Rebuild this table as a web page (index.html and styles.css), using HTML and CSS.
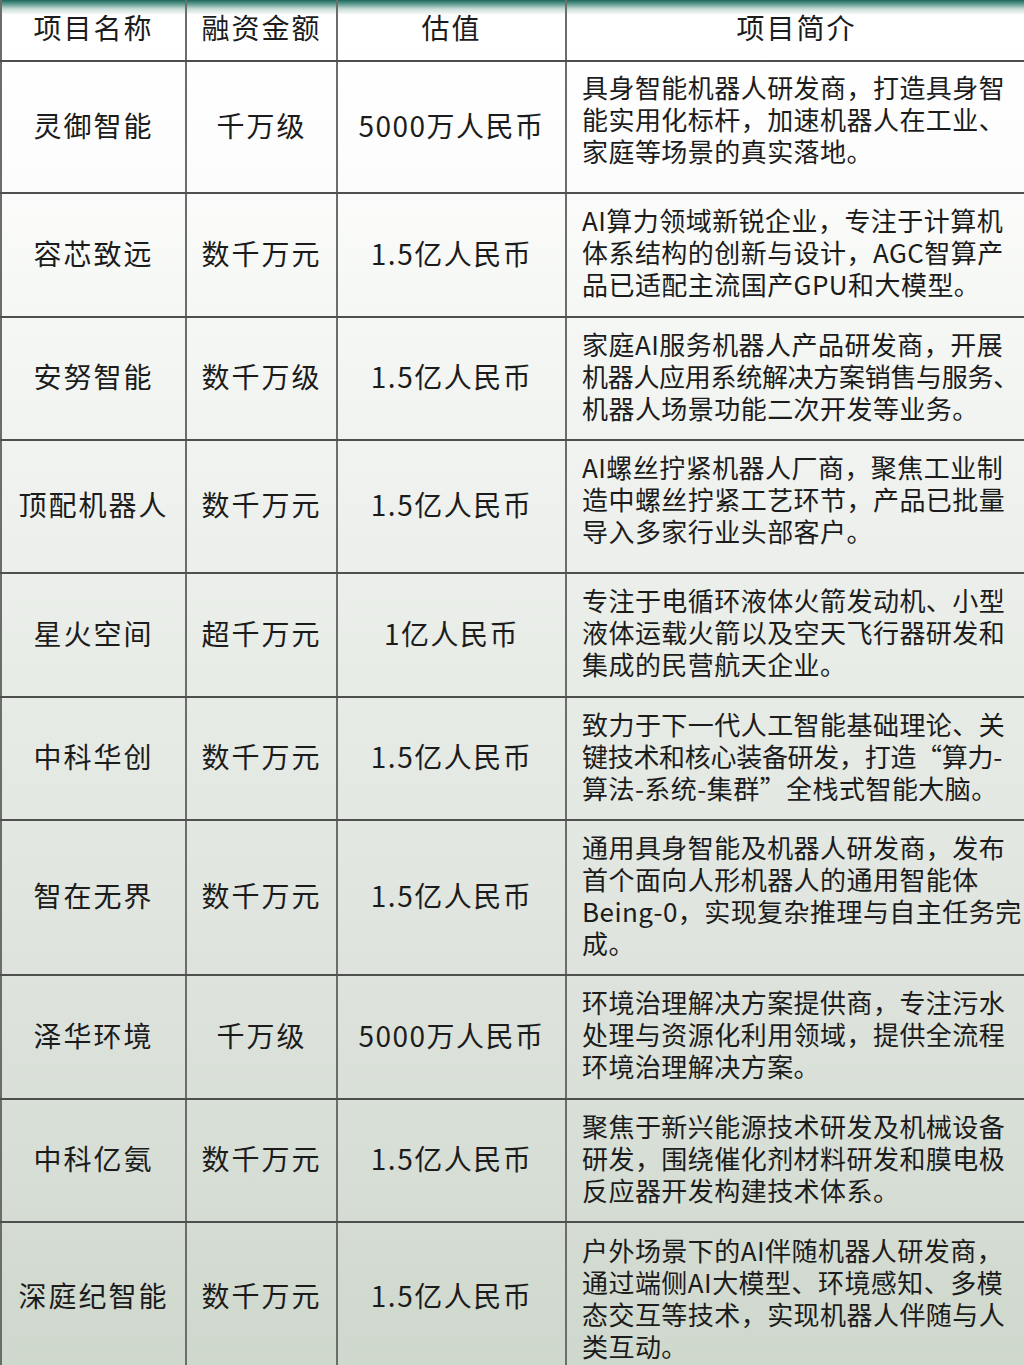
FILE: index.html
```html
<!DOCTYPE html>
<html lang="zh-CN">
<head>
<meta charset="utf-8">
<title>项目融资列表</title>
<link rel="stylesheet" href="styles.css">
</head>
<body>
<table class="grid">
  <colgroup>
    <col class="c-name"><col class="c-amount"><col class="c-value"><col class="c-desc">
  </colgroup>
  <thead>
    <tr class="head">
      <th>项目名称</th><th>融资金额</th><th>估值</th><th>项目简介</th>
    </tr>
  </thead>
  <tbody>
    <tr class="r1 tall">
      <td class="name">灵御智能</td><td class="amt">千万级</td><td class="val">5000万人民币</td>
      <td class="desc">具身智能机器人研发商，打造具身智<br>能实用化标杆，加速机器人在工业、<br>家庭等场景的真实落地。</td>
    </tr>
    <tr class="r2">
      <td class="name">容芯致远</td><td class="amt">数千万元</td><td class="val">1.5亿人民币</td>
      <td class="desc">AI算力领域新锐企业，专注于计算机<br>体系结构的创新与设计，AGC智算产<br>品已适配主流国产GPU和大模型。</td>
    </tr>
    <tr class="r3">
      <td class="name">安努智能</td><td class="amt">数千万级</td><td class="val">1.5亿人民币</td>
      <td class="desc">家庭AI服务机器人产品研发商，开展<br><span class="tight">机器人应用系统解决方案销售与服务、</span><br>机器人场景功能二次开发等业务。</td>
    </tr>
    <tr class="r4 tall">
      <td class="name">顶配机器人</td><td class="amt">数千万元</td><td class="val">1.5亿人民币</td>
      <td class="desc">AI螺丝拧紧机器人厂商，聚焦工业制<br>造中螺丝拧紧工艺环节，产品已批量<br>导入多家行业头部客户。</td>
    </tr>
    <tr class="r5">
      <td class="name">星火空间</td><td class="amt">超千万元</td><td class="val">1亿人民币</td>
      <td class="desc">专注于电循环液体火箭发动机、小型<br>液体运载火箭以及空天飞行器研发和<br>集成的民营航天企业。</td>
    </tr>
    <tr class="r6">
      <td class="name">中科华创</td><td class="amt">数千万元</td><td class="val">1.5亿人民币</td>
      <td class="desc">致力于下一代人工智能基础理论、关<br><span class="tight">键技术和核心装备研发，打造“算力-</span><br>算法-系统-集群”全栈式智能大脑。</td>
    </tr>
    <tr class="r7">
      <td class="name">智在无界</td><td class="amt">数千万元</td><td class="val">1.5亿人民币</td>
      <td class="desc">通用具身智能及机器人研发商，发布<br>首个面向人形机器人的通用智能体<br>Being-0，实现复杂推理与自主任务完<br>成。</td>
    </tr>
    <tr class="r8">
      <td class="name">泽华环境</td><td class="amt">千万级</td><td class="val">5000万人民币</td>
      <td class="desc">环境治理解决方案提供商，专注污水<br>处理与资源化利用领域，提供全流程<br>环境治理解决方案。</td>
    </tr>
    <tr class="r9">
      <td class="name">中科亿氨</td><td class="amt">数千万元</td><td class="val">1.5亿人民币</td>
      <td class="desc">聚焦于新兴能源技术研发及机械设备<br>研发，围绕催化剂材料研发和膜电极<br>反应器开发构建技术体系。</td>
    </tr>
    <tr class="r10">
      <td class="name">深庭纪智能</td><td class="amt">数千万元</td><td class="val">1.5亿人民币</td>
      <td class="desc">户外场景下的AI伴随机器人研发商，<br>通过端侧AI大模型、环境感知、多模<br>态交互等技术，实现机器人伴随与人<br>类互动。</td>
    </tr>
  </tbody>
</table>
</body>
</html>
```

FILE: styles.css
```css
html, body {
  margin: 0;
  padding: 0;
}
body {
  width: 1024px;
  height: 1365px;
  overflow: hidden;
  background: linear-gradient(to bottom,
    #1d685b 0px,
    #5d9a8f 4px,
    #c9ddd8 9px,
    #ffffff 15px,
    #fcfdfc 150px,
    #eef1ed 500px,
    #e2e7e1 850px,
    #d9e0d8 1100px,
    #cfd8cd 1365px);
  font-family: "Noto Sans CJK SC", "Noto Sans", sans-serif;
  color: #1c1c1c;
}
.grid {
  border-collapse: collapse;
  table-layout: fixed;
  width: 1025px;
}
.c-name { width: 185px; }
.c-amount { width: 151px; }
.c-value { width: 229px; }
.c-desc { width: 460px; }

.grid th, .grid td {
  border-left: 2px solid #6a6d6a;
  border-bottom: 2px solid #4d504d;
  padding: 0;
  vertical-align: middle;
}
.grid th {
  border-top: none;
  font-weight: 400;
  font-size: 28px;
  letter-spacing: 2px;
  text-align: center;
  line-height: 36px;
  padding-bottom: 6px;
}
.grid td {
  text-align: center;
  font-size: 28px;
  letter-spacing: 2px;
  line-height: 36px;
  padding-bottom: 5px;
}
.grid td.desc {
  text-align: left;
  font-size: 26px;
  letter-spacing: 0.45px;
  line-height: 32px;
  padding-left: 15px;
  padding-bottom: 6px;
  white-space: nowrap;
  overflow: hidden;
}
.grid .tall td.desc { padding-bottom: 16px; }
.grid td.val { letter-spacing: 1.5px; }
.tight { letter-spacing: -0.3px; }

.head { height: 61px; }
.r1 { height: 132px; }
.r2 { height: 124px; }
.r3 { height: 123px; }
.r4 { height: 133px; }
.r5 { height: 124px; }
.r6 { height: 123px; }
.r7 { height: 155px; }
.r8 { height: 124px; }
.r9 { height: 123px; }
.r10 { height: 150px; }
.r10 td { border-bottom: none; }
.r10 td.desc { padding-bottom: 0; }
```
